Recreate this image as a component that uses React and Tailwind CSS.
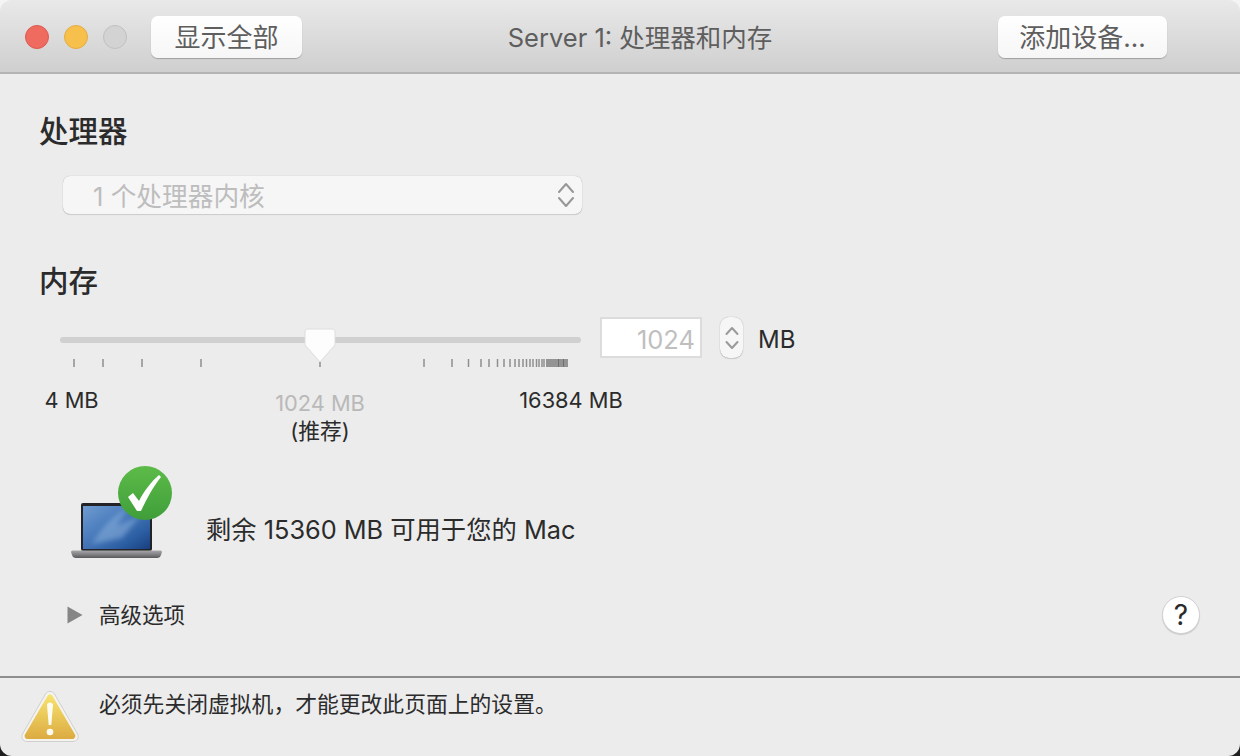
const TICKS = [74, 103, 142, 201, 320, 424, 452, 468.5, 481, 489, 497.5, 504, 510, 515, 519, 523, 526.5, 530, 533, 536.5, 539, 542, 544];

function Chevrons({ className = "", half = 5.5, rise = 6, height = 26 }) {
  const mid = height / 2;
  const gap = mid - 3 - rise;
  return (
    <svg width="16" height={height} viewBox={`0 0 16 ${height}`} fill="none" className={className}>
      <path d={`M${8 - half} ${3 + rise} 8 3l${half} ${rise}`} stroke="currentColor" strokeWidth="2" strokeLinecap="round" strokeLinejoin="round" />
      <path d={`M${8 - half} ${mid + gap} 8 ${mid + gap + rise}l${half} ${-rise}`} stroke="currentColor" strokeWidth="2" strokeLinecap="round" strokeLinejoin="round" />
    </svg>
  );
}

function SliderTicks() {
  return (
    <svg width="521" height="10" viewBox="60 358 521 10" className="block">
      {TICKS.map((x) => (
        <rect key={x} x={x - 0.75} y="359" width="1.5" height="8" fill="#8f8f8f" />
      ))}
      <rect x="546" y="359" width="22" height="8" fill="#949494" />
      <rect x="558" y="359" width="1" height="8" fill="#6f6f6f" />
      <rect x="563" y="359" width="1" height="8" fill="#6f6f6f" />
    </svg>
  );
}

function LaptopCheck() {
  return (
    <svg width="104" height="96" viewBox="0 0 104 96" className="block">
      <defs>
        <linearGradient id="screen" x1="0" y1="0" x2="1" y2="1">
          <stop offset="0" stopColor="#6f9bd0" />
          <stop offset="0.4" stopColor="#4a7cbc" />
          <stop offset="0.75" stopColor="#2c5ea3" />
          <stop offset="1" stopColor="#173f7f" />
        </linearGradient>
        <linearGradient id="base" x1="0" y1="0" x2="0" y2="1">
          <stop offset="0" stopColor="#a8a8aa" />
          <stop offset="0.6" stopColor="#7b7b7e" />
          <stop offset="1" stopColor="#58585b" />
        </linearGradient>
        <linearGradient id="badge" x1="0" y1="0" x2="0" y2="1">
          <stop offset="0" stopColor="#5dbb49" />
          <stop offset="1" stopColor="#3f9e39" />
        </linearGradient>
        <filter id="soft">
          <feGaussianBlur stdDeviation="2.5" />
        </filter>
        <clipPath id="screenClip">
          <rect x="13" y="42" width="67" height="43" />
        </clipPath>
      </defs>
      {/* origin is at page 70,464 */}
      <rect x="11" y="39" width="71" height="48" rx="2" fill="#232327" />
      <rect x="13" y="42" width="67" height="43" fill="url(#screen)" />
      <g clipPath="url(#screenClip)">
        <path d="M22 80c8-14 20-28 36-36l-12 18 24-10-18 22z" fill="#9cc0e6" opacity="0.45" filter="url(#soft)" />
      </g>
      <path d="M1 88c0-1 1-1.500 2-1.500h87c1 0 2 .5 2 1.500l-1 3c-.5 2-2 3-4 3H6c-2 0-3.500-1-4-3z" fill="url(#base)" />
      <circle cx="75" cy="29" r="27" fill="url(#badge)" />
      <path d="M58 33l5-4 6 8C74 27 81 18 89 11l2 2C83 23 76 36 71 47h-4z" fill="#fff" />
    </svg>
  );
}

function WarningIcon() {
  return (
    <svg width="58" height="52" viewBox="0 0 58 52" className="block">
      <defs>
        <linearGradient id="warn" x1="0" y1="0" x2="0" y2="1">
          <stop offset="0" stopColor="#f7e36f" />
          <stop offset="1" stopColor="#dcab42" />
        </linearGradient>
      </defs>
      <path d="M24.500 3c2-3.400 7-3.400 9 0l23 40c2 3.600-.4 7.500-4.500 7.500H6c-4.100 0-6.500-3.900-4.500-7.500z" fill="#f4f3ee" stroke="#cfcfcf" strokeWidth="1" />
      <path d="M26.500 5c1.100-1.900 3.900-1.900 5 0l22.500 38.500c1.100 2-.3 4.500-2.500 4.500h-45c-2.200 0-3.600-2.500-2.500-4.500z" fill="url(#warn)" />
      <path d="M26 14c0-3.500 6-3.500 6 0l-1.700 20h-2.600z" fill="#fdfcf3" />
      <circle cx="29" cy="41" r="3.300" fill="#fdfcf3" />
    </svg>
  );
}

export default function App() {
  return (
    <div className="w-[1240px] h-[756px] bg-[linear-gradient(to_bottom,#f4f4f4_50%,#1f1f1f_50%)]">
      <div className="w-full h-full flex flex-col overflow-hidden rounded-[12px] bg-[#ececec] text-[#2b2b2b] font-['Inter','Noto_Sans_CJK_SC',sans-serif]">
        {/* title bar */}
        <div className="h-[74px] shrink-0 flex items-center pt-[2px] pl-[25px] pr-[73px] bg-gradient-to-b from-[#e9e9e9] to-[#cfcfcf] border-b-2 border-[#b4b4b4]">
          <div className="flex gap-[15px] mr-[24px]">
            <div className="w-[24px] h-[24px] rounded-full bg-[#ef6a5f] border border-[#dc5a50]" />
            <div className="w-[24px] h-[24px] rounded-full bg-[#f7c04d] border border-[#e5ac3f]" />
            <div className="w-[24px] h-[24px] rounded-full bg-[#d3d3d3] border border-[#c0c0c0]" />
          </div>
          <button className="w-[151px] h-[42px] pt-[1px] rounded-[7px] bg-gradient-to-b from-[#ffffff] to-[#f6f6f6] shadow-[0_1px_1px_rgba(0,0,0,0.25)] text-[26px] leading-none text-[#5e5e5e]">
            显示全部
          </button>
          <div className="flex-1 text-center pt-[2px] pr-[20px] text-[25.5px] leading-none text-[#5e5e5e]">
            Server 1: 处理器和内存
          </div>
          <button className="w-[169px] h-[42px] pt-[1px] rounded-[7px] bg-gradient-to-b from-[#ffffff] to-[#f6f6f6] shadow-[0_1px_1px_rgba(0,0,0,0.25)] text-[26px] leading-none text-[#5e5e5e]">
            添加设备...
          </button>
        </div>

        {/* main content */}
        <div className="flex-1 flex flex-col min-h-0">
          <h2 className="ml-[39px] mt-[38px] h-[40px] flex items-center text-[29.5px] leading-none font-medium text-[#2b2b2b]">处理器</h2>

          <div className="ml-[63px] mt-[24px] w-[519px] h-[38px] flex items-center justify-between pl-[30px] pr-[8px] rounded-[7px] bg-[#f6f6f6] shadow-[0_0_1px_rgba(0,0,0,0.3),0_1px_1px_rgba(0,0,0,0.12)]">
            <span className="pt-[3px] text-[25.7px] leading-none text-[#bdbdbd]">1 个处理器内核</span>
            <Chevrons className="text-[#979797]" half={7} rise={8} height={28} />
          </div>

          <h2 className="ml-[39px] mt-[48px] h-[40px] flex items-center text-[29.5px] leading-none font-medium text-[#2b2b2b]">内存</h2>

          {/* memory slider row */}
          <div className="ml-[60px] mt-[15px] flex items-start">
            <div className="w-[521px]">
              <div className="relative h-[41px] pt-[5px] flex items-center">
                <div className="w-full h-[6px] rounded-full bg-[#d0d0d0]" />
                <svg width="34" height="40" viewBox="0 0 34 40" className="absolute left-[243px] top-[11px]">
                  <path d="M5 1h24c2 0 3 1 3 3v13L17 34 2 17V4c0-2 1-3 3-3z" fill="#fdfdfd" stroke="#dedede" strokeWidth="1" />
                </svg>
              </div>
              <SliderTicks />
            </div>
            <div className="ml-[19px] w-[102px] h-[41px] flex items-center justify-end pt-[4px] pr-[5px] bg-white border-2 border-[#dcdcdc] text-[25.5px] leading-none text-[#bfbfbf]">
              1024
            </div>
            <div className="ml-[18px] w-[23px] h-[41px] rounded-[9px] bg-[#f6f6f6] shadow-[0_0_1px_rgba(0,0,0,0.35),0_1px_1px_rgba(0,0,0,0.12)] flex items-center justify-center">
              <Chevrons className="text-[#9a9a9a]" half={5.5} rise={6} height={26} />
            </div>
            <div className="ml-[15px] h-[41px] flex items-center pt-[5px] text-[24px] leading-none text-[#2b2b2b]">MB</div>
          </div>

          {/* slider labels */}
          <div className="ml-[45px] mt-[22px] flex items-start text-[21.8px] leading-none">
            <div className="w-[53px] flex justify-center whitespace-nowrap text-[#2b2b2b]">4 MB</div>
            <div className="ml-[177px] w-[90px] flex flex-col items-center">
              <div className="pt-[3px] whitespace-nowrap text-[#b9b9b9]">1024 MB</div>
              <div className="mt-[6px] whitespace-nowrap text-[#2b2b2b]">(推荐)</div>
            </div>
            <div className="ml-[154px] w-[104px] flex justify-center whitespace-nowrap text-[#2b2b2b]">16384 MB</div>
          </div>

          {/* available memory */}
          <div className="ml-[70px] mt-[21px] flex items-center">
            <LaptopCheck />
            <div className="ml-[32px] pt-[36px] text-[25.3px] leading-none whitespace-nowrap text-[#2b2b2b]">剩余 15360 MB 可用于您的 Mac</div>
          </div>

          {/* advanced options */}
          <div className="ml-[67px] mr-[40px] mt-[36px] flex items-center">
            <svg width="16" height="18" viewBox="0 0 16 18">
              <path d="M.5.5 15.500 9 .5 17.500z" fill="#868686" />
            </svg>
            <span className="ml-[16px] pt-[2px] text-[21.5px] leading-none text-[#2b2b2b]">高级选项</span>
            <div className="ml-auto w-[38px] h-[38px] rounded-full bg-white border border-[#d2d2d2] shadow-[0_1px_1px_rgba(0,0,0,0.15)] flex items-center justify-center text-[28px] leading-none text-[#2b2b2b]">
              ?
            </div>
          </div>
        </div>

        {/* footer */}
        <div className="h-[80px] shrink-0 border-t-2 border-[#8e8e8e] flex items-start pl-[21px]">
          <div className="mt-[13px]">
            <WarningIcon />
          </div>
          <div className="ml-[20px] mt-[16px] text-[21.8px] leading-none whitespace-nowrap text-[#2b2b2b]">
            必须先关闭虚拟机，才能更改此页面上的设置。
          </div>
        </div>
      </div>
    </div>
  );
}
